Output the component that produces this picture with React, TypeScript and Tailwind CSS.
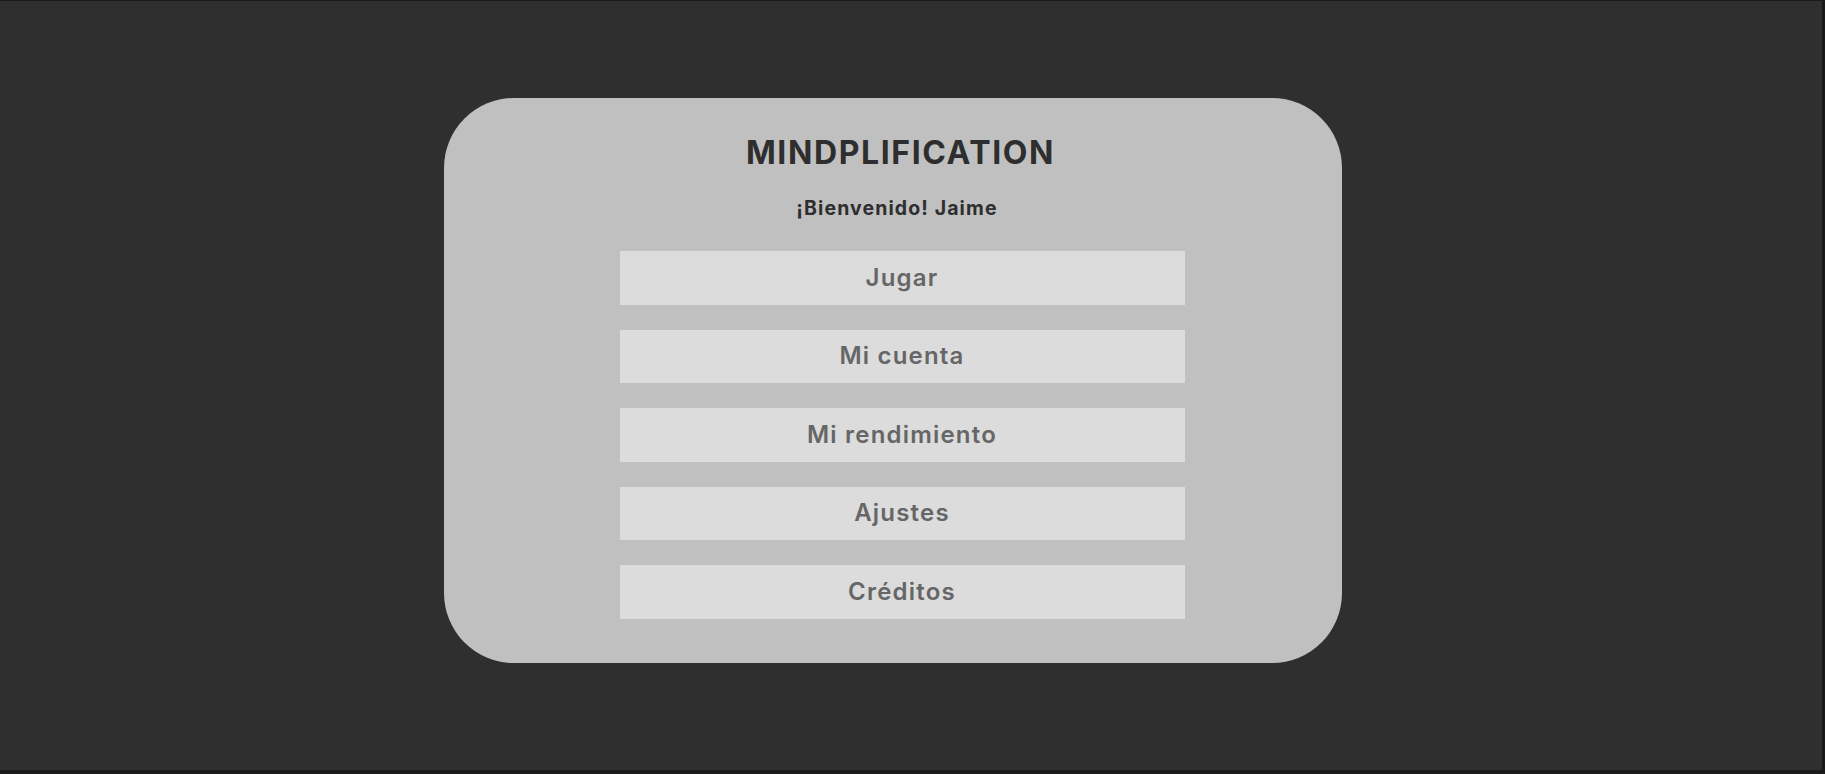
const items = ["Jugar", "Mi cuenta", "Mi rendimiento", "Ajustes", "Créditos"];

export default function App() {
  return (
    <div className="h-[774px] w-[1825px] bg-[#1a1a1a] pt-px" style={{ fontFamily: "Inter, 'Open Sans', sans-serif" }}>
      <div className="h-[769px] w-[1822px] overflow-hidden bg-[#2f2f2f] pt-[97px] pl-[444px]">
        <div className="flex h-[565px] w-[898px] flex-col items-center rounded-[70px] bg-[#c0c0c0] pt-[36px]">
          <h1 className="pl-[15px] text-[32px] leading-[38px] font-bold tracking-[1.6px] text-[#2e2e2e]">MINDPLIFICATION</h1>
          <p className="mt-[24px] pl-[8px] text-[19.5px] leading-[24px] font-bold tracking-[1.1px] text-[#2e2e2e]">¡Bienvenido! Jaime</p>

          <div className="mt-[31px] flex flex-col gap-[25px] pl-[18px]">
            {items.map((label) => (
              <button
                key={label}
                className="flex h-[53.5px] w-[565px] items-center justify-center bg-[#dcdcdc] text-[24px] font-semibold tracking-[1.2px] text-[#666666]"
              >
                {label}
              </button>
            ))}
          </div>
        </div>
      </div>
    </div>
  );
}
